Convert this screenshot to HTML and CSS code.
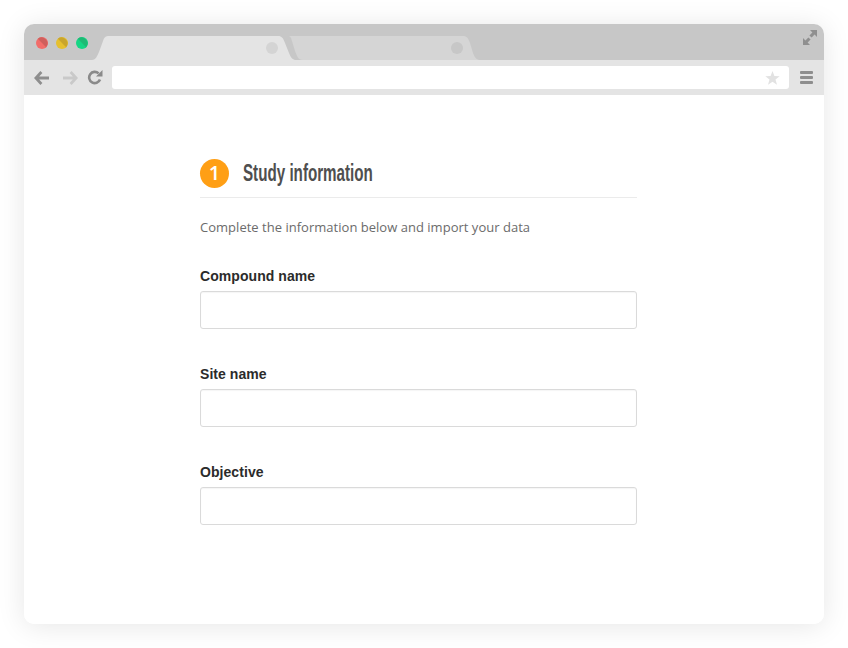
FILE: index.html
```html
<!DOCTYPE html>
<html lang="en">
<head>
<meta charset="utf-8">
<title>Study information</title>
<link rel="stylesheet" href="styles.css">
</head>
<body>
<div class="window">
  <div class="titlebar">
    <svg class="tabs" width="800" height="36" viewBox="0 0 800 36">
      <path class="tab-back" d="M279 36 C274 36 273 32 271 27 L268 17 C267 13 266 12 264 12 L439 12 C443 12 444 14 446 19 L449 29 C451 34 453 36 456 36 Z"/>
      <path class="tab-front" d="M68 36 C72 36 73 32 75 28 L79 17 C80 13 82 12 85 12 L254 12 C258 12 259 14 261 19 L265 29 C267 34 269 36 272 36 Z"/>
      <circle class="dot-front" cx="248" cy="24" r="6"/>
      <circle class="dot-back" cx="433" cy="24" r="6"/>
      <g>
        <circle cx="18" cy="19" r="6" fill="#f26d6a"/>
        <path d="M13.8 14.8 A6 6 0 0 1 22.2 23.2 Z" fill="#cf5f5c"/>
        <circle cx="38" cy="19" r="6" fill="#e6c02f"/>
        <path d="M33.8 14.8 A6 6 0 0 1 42.2 23.2 Z" fill="#c9a52c"/>
        <circle cx="58" cy="19" r="6" fill="#15d684"/>
        <path d="M53.8 14.8 A6 6 0 0 1 62.2 23.2 Z" fill="#1dba74"/>
      </g>
      <path class="expand" d="M786 6 H793 V13 L790.6 10.6 L787.6 13.6 L785.4 11.4 L788.4 8.4 Z M779 21 V14 L781.4 16.4 L784.4 13.4 L786.6 15.6 L783.6 18.6 L786 21 Z"/>
    </svg>
  </div>
  <div class="toolbar">
    <svg class="nav-icon" width="16" height="14" viewBox="0 0 16 14"><path class="arrow-dark" d="M7.4 1 L1.8 7 L7.4 13 M2 7 H15"/></svg>
    <svg class="nav-icon" width="16" height="14" viewBox="0 0 16 14"><path class="arrow-light" d="M8.6 1 L14.2 7 L8.6 13 M14 7 H1"/></svg>
    <svg class="nav-icon" width="16" height="15" viewBox="0 0 16 15"><path class="reload" d="M13 9.5 A5.6 5.6 0 1 1 11.6 3.4"/><path class="reload-head" d="M9 6.5 H15.5 V0 Z"/></svg>
    <div class="address">
      <svg width="15" height="14" viewBox="0 0 15 14"><path class="star" d="M7.5 0 L9.4 5 L14.7 5.2 L10.5 8.5 L12 13.8 L7.5 10.7 L3 13.8 L4.5 8.5 L.3 5.2 L5.6 5 Z"/></svg>
    </div>
    <div class="menu"><span></span><span></span><span></span></div>
  </div>
  <main class="content">
    <form class="form">
      <header class="step">
        <span class="step-num">1</span>
        <h1 class="step-title">Study information</h1>
      </header>
      <p class="intro">Complete the information below and import your data</p>
      <div class="field"><label class="field-label">Compound name</label><input class="field-input" type="text"></div>
      <div class="field"><label class="field-label">Site name</label><input class="field-input" type="text"></div>
      <div class="field"><label class="field-label">Objective</label><input class="field-input" type="text"></div>
    </form>
  </main>
</div>
</body>
</html>
```
FILE: styles.css
```css
* { box-sizing: border-box; }
html, body { margin: 0; height: 100%; background: #fff; overflow: hidden; }
body { padding: 24px; }
.window {
  width: 800px;
  height: 600px;
  border-radius: 10px;
  background: #fff;
  box-shadow: 0 2px 28px rgba(0, 0, 0, .1);
  overflow: hidden;
  display: flex;
  flex-direction: column;
}
.titlebar { height: 36px; background: #c7c7c7; flex: none; }
.tabs { display: block; }
.tab-front { fill: #e4e4e4; }
.tab-back { fill: #d5d5d5; }
.dot-front { fill: #d4d4d4; }
.dot-back { fill: #c7c7c7; }
.expand { fill: #8f8f8f; }
.toolbar {
  height: 35px;
  background: #e4e4e4;
  flex: none;
  display: flex;
  align-items: flex-start;
  padding: 6px 11px 0 10px;
}
.nav-icon { margin-top: 5px; margin-right: 12px; flex: none; fill: none; }
.nav-icon:nth-child(2) { margin-right: 9px; }
.nav-icon:nth-child(3) { margin-right: 9px; margin-top: 4px; }
.arrow-dark { stroke: #8e8e8e; stroke-width: 2.8; fill: none; }
.arrow-light { stroke: #c9c9c9; stroke-width: 2.8; fill: none; }
.reload { stroke: #8a8a8a; stroke-width: 2.6; fill: none; }
.reload-head { fill: #8a8a8a; }
.address {
  flex: 1;
  height: 23px;
  background: #fff;
  border-radius: 3px;
  display: flex;
  align-items: center;
  justify-content: flex-end;
  padding-right: 9px;
}
.address svg { display: block; }
.star { fill: #e2e2e2; }
.menu {
  width: 13px;
  margin-left: 11px;
  margin-top: 5px;
  display: flex;
  flex-direction: column;
  gap: 2px;
}
.menu span { display: block; height: 3px; background: #8e8e8e; border-radius: 1px; }
.content { flex: 1; background: #fff; padding: 64px 0 0 176px; }
.form { width: 437px; }
.step {
  display: flex;
  align-items: center;
  height: 39px;
  padding-bottom: 10px;
  border-bottom: 1px solid #ebebeb;
}
.step-num {
  width: 29px;
  height: 29px;
  border-radius: 50%;
  background: #ff9f15;
  color: #fff;
  font: 600 20px/28px "Open Sans", sans-serif;
  text-align: center;
  flex: none;
}
.step-title {
  margin: 0 0 0 14px;
  font: 700 23px/29px "Liberation Sans", sans-serif;
  color: #4f4f4f;
  white-space: nowrap;
  transform: scaleX(.66);
  transform-origin: left center;
}
.intro {
  margin: 20px 0 0;
  font: 400 13px/19px "Open Sans", sans-serif;
  letter-spacing: .02px;
  color: #6b6b6b;
}
.field { margin-top: 29px; }
.field + .field { margin-top: 35px; }
.field-label {
  display: block;
  font: 700 14px/20px "Liberation Sans", sans-serif;
  letter-spacing: .06px;
  color: #2b2b2b;
  margin-bottom: 5px;
}
.field-input {
  display: block;
  width: 100%;
  height: 38px;
  border: 1px solid #dadada;
  border-radius: 3px;
  background: #fff;
  box-shadow: inset 0 1px 1px rgba(0, 0, 0, .04);
  outline: none;
}
```
